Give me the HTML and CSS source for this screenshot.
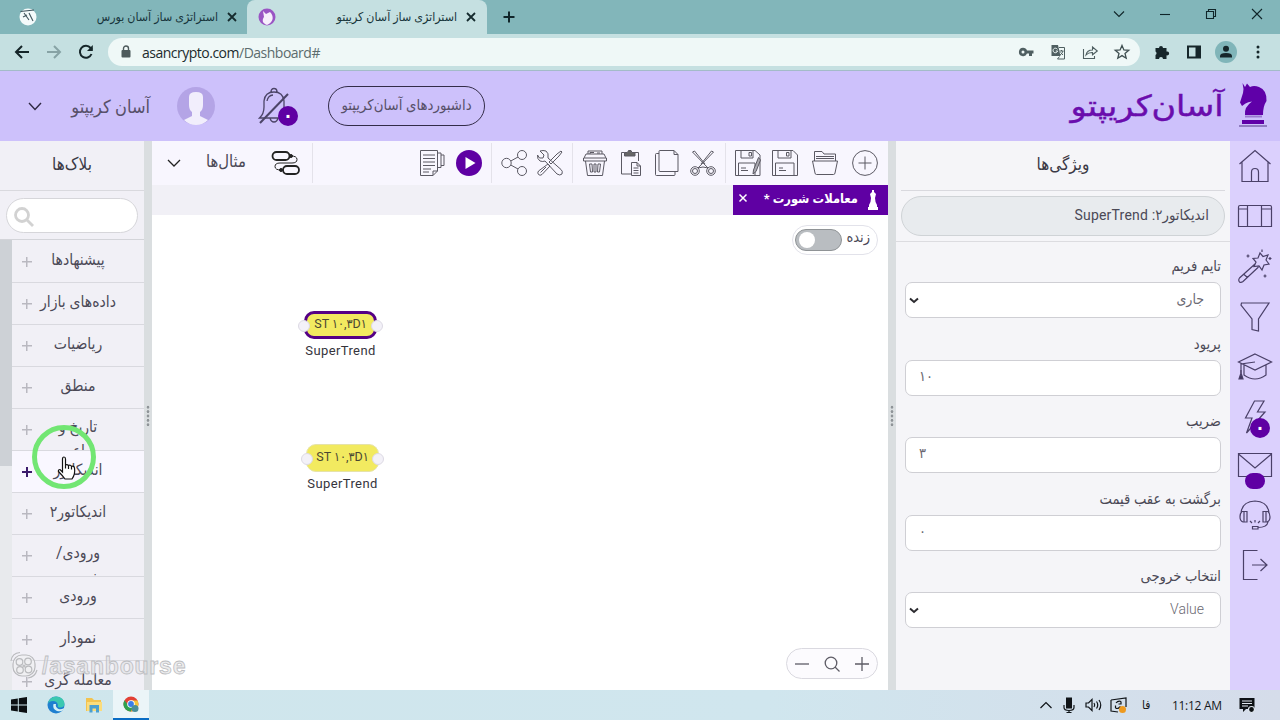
FILE: index.html
```html
<!DOCTYPE html>
<html lang="fa">
<head>
    <meta charset="UTF-8">
    <meta name="viewport" content="width=device-width, initial-scale=1.0">
    <title>استراتژی ساز آسان کریپتو</title>
    <link rel="stylesheet" href="styles.css">
</head>
<body>
    <!-- Browser tabs -->
    <div class="tabs">
        <div class="tab">
            <svg class="favicon" viewBox="0 0 18 18"><circle cx="9" cy="9" r="8.5" fill="#f4fafb"/><path d="M1.500 3.500 L15 2 M5 5 L10 12 M10 5 L14 13 M4 9 L8 7" stroke="#40535c" stroke-width="1.100" fill="none"/></svg>
            <span class="tab-title" dir="rtl">استراتژی ساز آسان بورس</span>
            <svg class="tab-close" viewBox="0 0 10 10"><path d="M1 1 L9 9 M9 1 L1 9" stroke="#152b2e" stroke-width="1.8"/></svg>
        </div>
        <div class="tab active">
            <svg class="favicon" viewBox="0 0 18 18"><circle cx="9" cy="9" r="8.5" fill="#9a55c4"/><path d="M5 3 L8 6 L12 4 C16 8 16 14 9 17 C4 15 4 12 6 9 Z" fill="#f7eefc"/></svg>
            <span class="tab-title" dir="rtl">استراتژی ساز آسان کریپتو</span>
            <svg class="tab-close" viewBox="0 0 10 10"><path d="M1 1 L9 9 M9 1 L1 9" stroke="#152b2e" stroke-width="1.8"/></svg>
        </div>
        <svg class="new-tab" viewBox="0 0 12 12"><path d="M6 0.5 V11.5 M0.5 6 H11.5" stroke="#10262a" stroke-width="2"/></svg>
        <div class="window-buttons">
            <svg viewBox="0 0 12 12"><path d="M1 3.5 L6 8.5 L11 3.5" /></svg>
            <svg viewBox="0 0 12 12"><path d="M1 6.5 H11" /></svg>
            <svg viewBox="0 0 12 12"><path d="M1.5 3.5 H8.5 V10.5 H1.5 Z M3.5 3.5 V1.5 H10.5 V8.5 H8.5" /></svg>
            <svg viewBox="0 0 12 12"><path d="M1 1 L11 11 M11 1 L1 11" /></svg>
        </div>
    </div>

    <!-- Address bar -->
    <div class="toolbar">
        <svg class="nav" viewBox="0 0 16 16"><path d="M15 8 H2 M8 2 L2 8 L8 14" /></svg>
        <svg class="nav disabled" viewBox="0 0 16 16"><path d="M1 8 H14 M8 2 L14 8 L8 14" /></svg>
        <svg class="nav" viewBox="0 0 16 16"><path d="M13.5 10 A6 6 0 1 1 12.6 4 L14 5.6" /><path d="M14.8 1 V7 H9 Z" class="solid"/></svg>
        <div class="address">
            <svg class="lock" viewBox="0 0 10 14"><rect x="0.5" y="5" width="9" height="7.5" rx="1" fill="#4d5a5c"/><path d="M2.5 6 V3.5 A2.5 2.5 0 0 1 7.5 3.5 V6" fill="none" stroke="#4d5a5c" stroke-width="1.4"/></svg>
            <span class="url">asancrypto.com<span class="path">/Dashboard#</span></span>
            <svg class="tool" viewBox="0 0 16 16"><path d="M5 3.7 A4.2 4.2 0 1 0 9 9.5 H11 V12 H14 V9.5 H15.5 V6.5 H9 A4.2 4.2 0 0 0 5 3.7 Z M5 6.5 A1.5 1.5 0 1 1 5 9.5 A1.5 1.5 0 1 1 5 6.5 Z" fill="#4f5f61" fill-rule="evenodd"/></svg>
            <svg class="tool" viewBox="0 0 16 16"><path d="M1.5 1 H8 L10.5 12 H1.5 Z" fill="#4f5f61"/><path d="M9 3.5 H14.5 V15 H7.5 L9.5 12.5 M9.5 7 H13.5 M11.5 6 V7 M13 7 Q12 10 10 11 M10.5 8.5 L13 11" stroke="#4f5f61" fill="none"/><path d="M7.4 5.4 A2.3 2.3 0 1 0 7.6 7 H5.8" stroke="#eff8f7" fill="none"/></svg>
            <svg class="tool" viewBox="0 0 16 16"><path d="M1.5 5 V14.5 H12.5 V12 M4 11 Q5 6 10.5 6 V3 L15.3 7 L10.5 10.8 V8.5 Q6.5 8.3 4 11 Z" stroke="#4f5f61" stroke-width="1.1" fill="none"/></svg>
            <svg class="tool" viewBox="0 0 16 16"><path d="M8 1.5 L9.9 6 L14.7 6.3 L11 9.4 L12.2 14.2 L8 11.6 L3.8 14.2 L5 9.4 L1.3 6.3 L6.1 6 Z" stroke="#3f4f51" stroke-width="1.3" fill="none"/></svg>
        </div>
        <svg class="ext" viewBox="0 0 16 16"><path d="M1.5 4 H5 A2 2 0 1 1 9 4 H12.5 V7.5 A2 2 0 1 1 12.5 11.3 V15 H9 A2 2 0 0 0 5 15 H1.5 V11 A2 2 0 0 0 1.5 7.5 Z" fill="#16262a"/></svg>
        <svg class="ext" viewBox="0 0 16 16"><path d="M1 1.5 H15 V14.5 H1 Z M3 3.5 V12.5 H9.5 V3.5 Z" fill="#16262a" fill-rule="evenodd"/></svg>
        <svg class="profile" viewBox="0 0 22 22"><circle cx="11" cy="11" r="11" fill="#80b5b9"/><circle cx="11" cy="7.8" r="3" fill="#16262a"/><path d="M5 16.5 V15 Q5 12 11 12 Q17 12 17 15 V16.5 Z" fill="#16262a"/></svg>
        <svg class="dots" viewBox="0 0 4 14"><circle cx="2" cy="2" r="1.5"/><circle cx="2" cy="7" r="1.5"/><circle cx="2" cy="12" r="1.5"/></svg>
    </div>

    <!-- Site header -->
    <header class="header">
        <svg class="user-arrow" viewBox="0 0 14 10"><path d="M1 2 L7 8.5 L13 2" /></svg>
        <span class="user-name" dir="rtl">آسان کریپتو</span>
        <svg class="avatar" viewBox="0 0 38 38"><circle cx="19" cy="19" r="19" fill="#b4a4e6"/><path d="M12 10 Q12 5 19 5 Q26 5 26 10 V18 Q26 23 23 25 V29 L31 33 Q26 38 19 38 Q12 38 7 33 L15 29 V25 Q12 23 12 18 Z" fill="#f1eefc"/></svg>
        <div class="bell">
            <svg viewBox="0 0 32 38"><path d="M1.500 31 Q6 27 6 20 V14 Q7 5 16 5 Q25 5 26 14 V20 Q26 27 30.500 31 Z M13 5 Q13 1.500 16 1.500 Q19 1.500 19 5 M12 31 Q13 35 16 35 Q19 35 20 31 M9 14 Q10 8.500 15 8" /><path d="M2 36 L30 7" stroke-width="2"/></svg>
            <span class="badge">۰</span>
        </div>
        <div class="dashboards" dir="rtl">داشبوردهای آسان‌کریپتو</div>
        <div class="logo">
            <svg class="logo-text" viewBox="0 0 154 46"><text x="76" y="34" text-anchor="middle" textLength="153" lengthAdjust="spacingAndGlyphs" direction="rtl">آسان‌کریپتو</text></svg>
            <svg class="logo-knight" viewBox="0 0 28 46"><path d="M3.500 1 L6 5 L8 1.500 L11 5 Q15 3 20 5 Q28 8 27.500 19 Q24 24 24 33 H6 Q5 25 13 19.500 Q9 20 6.500 21.500 L3 24 L1 20.500 L4 11 L4.500 7 Z" fill="#5f00a8"/><path d="M6 34.500 H23" stroke="#9a7ad0" stroke-width="2"/><path d="M3 38 H25 V42 H3 Z" fill="#5f00a8"/><path d="M0 44 H28" stroke="#8f7cc0" stroke-width="2"/></svg>
        </div>
    </header>

    <main class="main">
        <!-- Blocks panel -->
        <section class="blocks">
            <h2 class="panel-title" dir="rtl">بلاک‌ها</h2>
            <div class="search-row">
                <div class="search"><svg viewBox="0 0 20 20"><circle cx="8" cy="8" r="6.500"/><path d="M13 13 L19 19"/></svg></div>
            </div>
            <div class="block-scroll">
                <div class="scrollbar"><div class="thumb"></div></div>
                <ul class="block-list">
                    <li><i class="plus"></i><span dir="rtl">پیشنهادها</span></li>
                    <li><i class="plus"></i><span dir="rtl">داده‌های بازار</span></li>
                    <li><i class="plus"></i><span dir="rtl">ریاضیات</span></li>
                    <li><i class="plus"></i><span dir="rtl">منطق</span></li>
                    <li><i class="plus"></i><span class="wrap" dir="rtl">تاریخ و<br>ساعت</span></li>
                    <li class="hover"><i class="plus"></i><span dir="rtl">اندیکاتور</span></li>
                    <li><i class="plus"></i><span dir="rtl">اندیکاتور۲</span></li>
                    <li><i class="plus"></i><span class="wrap" dir="rtl">ورودی/<br>خروجی</span></li>
                    <li><i class="plus"></i><span dir="rtl">ورودی</span></li>
                    <li><i class="plus"></i><span dir="rtl">نمودار</span></li>
                    <li><i class="plus"></i><span dir="rtl">معامله گری</span></li>
                </ul>
            </div>
        </section>

        <div class="gutter"></div>

        <!-- Editor -->
        <section class="editor">
            <div class="actions">
                <div class="group samples">
                    <svg class="arrow" viewBox="0 0 14 10"><path d="M1 2 L7 8 L13 2"/></svg>
                    <span dir="rtl">مثال‌ها</span>
                    <svg class="flow" viewBox="0 0 30 26"><rect x="1.500" y="2" width="17" height="8" rx="4" stroke-width="1.800"/><rect x="12" y="16" width="16" height="8" rx="4" stroke-width="1.800"/><path d="M20 6 Q26 6 26 9.500 Q26 13 21 13 H9 Q4 13 4 16.500 Q4 20 10 20"/><circle cx="20" cy="6" r="1.500" fill="#222"/><circle cx="10" cy="20" r="1.500" fill="#222"/></svg>
                </div>
                <div class="group run">
                    <svg viewBox="0 0 26 26"><path d="M1.500 0.500 H18.500 V21 L14 25.500 H1.500 Z M14 25.500 V21 H18.500 M18.500 3 H22 V17.500 H18.500 M22 5 H25 V15.500 H22 M4 5 H16 M4 8.500 H16 M4 12 H16 M4 15.500 H16 M4 19 H12 M4 22 H10"/></svg>
                    <svg viewBox="0 0 26 26"><circle cx="13" cy="13" r="13" class="purple"/><path d="M9.500 7 L19.500 13 L9.500 19 Z" class="white"/></svg>
                </div>
                <div class="group tools">
                    <svg viewBox="0 0 26 26"><circle cx="5.500" cy="13" r="4.700"/><circle cx="21" cy="5" r="4.500"/><circle cx="21" cy="21" r="4.500"/><path d="M9.800 11 L17 7 M9.800 15 L17 19"/></svg>
                    <svg viewBox="0 0 26 26"><path d="M3 1 L7 5 L6 8 L2.500 8 L0.500 5 Q0 9 3 11 Q6 12 8 11 L20 24 Q23 26 25 24 Q26 21 24 19.500 L11 8 Q12 3 9 1 Q6 0 3 1 Z M24 1 L25 2 L22 6 L14 14 L12 12 L20 4 Z M11 14 L13 16 L5 24.500 Q3 26 1.500 24.500 Q0 23 1.500 21 Z M3.500 22.500 L9 17"/></svg>
                </div>
                <div class="group edit">
                    <svg viewBox="0 0 26 26"><path d="M6 4 V1 H20 V4 M4 4 H22 L24 8 H2 Z M1.500 8 V11 H24.500 V8 M3.500 11 L5.500 25.500 H20.500 L22.500 11 M7.500 14 L8.500 22 H10.500 L10 14 Z M12 14 H14 V22 H12 Z M16 14 L15.500 22 H17.500 L18.500 14 Z M8 4 V2.500 H12 M15 3 H18"/></svg>
                    <svg viewBox="0 0 26 26"><path d="M6.500 2.500 H3.500 V24 H13 M17 2.500 H20.500 V11 M13.500 12.500 H19 L22.500 16 V25.500 H13.500 Z M19 12.500 V16 H22.500 M15.500 18 H20.500 M15.500 20.500 H20.500 M15.500 23 H20.500"/><path d="M6.500 2.500 H9.500 L10.500 0.500 H13 L14 2.500 H17 V6 H6.500 Z" fill="#666"/></svg>
                    <svg viewBox="0 0 26 26"><path d="M6 0.500 H20 L24 4.500 V21.500 H6 Q5 21.500 5 20.500 V1.500 Q5 0.500 6 0.500 Z M20 0.500 V4.500 H24 M5 3.500 H2.500 Q1.500 3.500 1.500 4.500 V24.500 Q1.500 25.500 2.500 25.500 H20 Q21 25.500 21 24.500 V21.500"/></svg>
                    <svg viewBox="0 0 26 26"><circle cx="5" cy="21" r="4.300"/><circle cx="21" cy="21" r="4.300"/><circle cx="5" cy="21" r="2.500"/><circle cx="21" cy="21" r="2.500"/><path d="M8 18 L23.500 2 L21.500 1 L11 14 M18 18 L2.500 2 L4.500 1 L15 14 M8 18 L13 17 L18 18"/></svg>
                </div>
                <div class="group files">
                    <svg viewBox="0 0 26 26"><path d="M0.500 0.500 H20 L25 5 V25.500 H0.500 Z M6 0.500 V8 H18 V0.500 M14 2.500 H16.500 V6 H14 Z M3.500 25.500 V13 H20 V25.500 M6 18 H11 M6 20.500 H13"/><path d="M23.500 7.500 L18.500 20 L18 24 L21 21.500 L25.500 10 Z" fill="#aaa8b0"/></svg>
                    <svg viewBox="0 0 26 26"><path d="M0.500 0.500 H21 L25.500 5 V25.500 H0.500 Z M6 0.500 V8 H19 V0.500 M14.500 2.500 H17 V6 H14.500 Z M3.500 25.500 V13 H22 V25.500 M7 18 H11 M7 20.500 H14"/></svg>
                    <svg class="folder" viewBox="0 0 26 26"><path d="M2.500 11 V1.500 H10 L12 4 H23.500 V11 M4 6.500 H22 M4 8.500 H22 M0.500 11 H25.500 L23 23 Q22.800 24.500 21.500 24.500 H4.500 Q3.200 24.500 3 23 Z"/></svg>
                    <svg class="add" viewBox="0 0 26 26"><circle cx="13" cy="13" r="12.400"/><path d="M13 6.500 V19.500 M6.500 13 H19.500"/></svg>
                </div>
            </div>
            <div class="doc-tabs">
                <div class="doc-tab">
                    <svg class="close" viewBox="0 0 10 10"><path d="M1.500 1.500 L8.500 8.500 M8.500 1.500 L1.500 8.500"/></svg>
                    <span dir="rtl">معاملات شورت *</span>
                    <svg class="piece" viewBox="0 0 12 20"><path d="M5 0 H7 V2 L9 4 L8 8 Q8 12 10 15 V17 H11 V20 H1 V17 H2 V15 Q4 12 4 8 L3 4 L5 2 Z"/></svg>
                </div>
            </div>
            <div class="canvas">
                <div class="live"><span class="switch"></span><span class="live-text" dir="rtl">زنده</span></div>
                <div class="node node-first selected">
                    <div class="node-box">ST ۱۰,۳D۱</div>
                    <div class="node-name">SuperTrend</div>
                </div>
                <div class="node node-second">
                    <div class="node-box">ST ۱۰,۳D۱</div>
                    <div class="node-name">SuperTrend</div>
                </div>
                <div class="zoom">
                    <svg viewBox="0 0 16 16"><path d="M1 8 H15"/></svg>
                    <svg viewBox="0 0 16 16"><circle cx="7" cy="7" r="5.800"/><path d="M11 11 L15.500 15.500"/></svg>
                    <svg viewBox="0 0 16 16"><path d="M1 8 H15 M8 1 V15"/></svg>
                </div>
            </div>
        </section>

        <div class="gutter"></div>

        <!-- Properties panel -->
        <section class="props" dir="rtl">
            <h2 class="panel-title">ویژگی‌ها</h2>
            <div class="props-name"><div>اندیکاتور۲: <span class="latin">SuperTrend</span></div></div>
            <div class="field">
                <label>تایم فریم</label>
                <div class="input select"><span>جاری</span><svg viewBox="0 0 10 7"><path d="M1 1.500 L5 5 L9 1.500"/></svg></div>
            </div>
            <div class="field">
                <label>پریود</label>
                <div class="input number">۱۰</div>
            </div>
            <div class="field">
                <label>ضریب</label>
                <div class="input number">۳</div>
            </div>
            <div class="field">
                <label>برگشت به عقب قیمت</label>
                <div class="input number">۰</div>
            </div>
            <div class="field">
                <label>انتخاب خروجی</label>
                <div class="input select"><span class="value">Value</span><svg viewBox="0 0 10 7"><path d="M1 1.500 L5 5 L9 1.500"/></svg></div>
            </div>
        </section>

        <!-- Right menu -->
        <nav class="side">
            <a><svg viewBox="0 0 34 34"><path d="M1.500 15 L17 1.500 L32.500 15 M4 13 V32.500 H30 V13 M13.500 32.500 V23 Q13.500 19.500 17 19.500 Q20.500 19.500 20.500 23 V32.500"/></svg></a>
            <a><svg viewBox="0 0 34 34"><path d="M2 6.500 H32 Q33.500 6.500 33.500 8 V27.500 H0.500 V8 Q0.500 6.500 2 6.500 Z M9.500 6.500 V27.500 M23.500 6.500 V27.500 M0.500 10 H9.500 M23.500 10 H33.500"/></svg></a>
            <a><svg viewBox="0 0 34 34"><path d="M22 4 L25 7.500 L30 6 L28 11 L31 15 L26 16 L24 21 L21 17 L16 17.500 L18 13 L15 9.500 L20 9 Z M17 15 L1.500 29 Q0 31 1.500 33 Q3 34 5 32.500 L20.500 18 M6 25.500 L9.500 28.500"/><path d="M10 5.500 V8.500 M8.500 7 H11.500 M24 0.500 V3 M32 8 V11 M30.500 9.500 H33.500 M27 25.500 V28.500 M25.500 27 H28.500"/></svg></a>
            <a><svg viewBox="0 0 34 34"><path d="M3.500 4 H31 L20.500 20 V32 L14 30.500 V20 L3 6 Z"/></svg></a>
            <a><svg viewBox="0 0 34 34"><path d="M17 5 L33.500 13 L17 21 L0.500 13 Z M6 16 V26 Q17 34 28 26 V16 M17 13 L3 15 V24"/><path d="M3 24 L1 30 H5 Z M3 21 V25" fill="#3f3560"/></svg></a>
            <a><svg viewBox="0 0 34 34"><path d="M16.500 2 H26 L19.500 13 H27 L8.500 34 L14 19 H7.500 Z"/></svg><span class="badge bolt">۰</span></a>
            <a><svg viewBox="0 0 34 34"><path d="M0.500 4.500 H33.500 V27.500 H0.500 Z M0.500 5 L17 19 L33.500 5"/></svg><span class="badge mail"></span></a>
            <a><svg viewBox="0 0 34 34"><path d="M3 14 Q4 2.500 17 2 Q30 2.500 31 14 M3 12.500 H9 V23 H5 Q2 22 2 18 Q2 14 4 12.500 M6 12.500 V23 M31 12.500 H25 V23 H29 Q32 22 32 18 Q32 14 30 12.500 M28 12.500 V23 M30 23 Q29 28.500 20 28.500 M14.500 27.500 H20 V30 H14.500 Z M12 22 L14 24 M17 21 V23.500 M22 22 L20 24"/></svg></a>
            <a><svg viewBox="0 0 34 34"><path d="M19.500 1.500 H5.500 V30.500 H19.500 M14 16 H29 M22.500 10 L29 16 L22.500 22"/></svg></a>
        </nav>
    </main>

    <!-- Windows taskbar -->
    <footer class="taskbar">
        <div class="app"><svg viewBox="0 0 18 18"><path d="M1 3.500 L7.800 2.500 V8.500 H1 Z M8.800 2.300 L17 1 V8.500 H8.800 Z M1 9.500 H7.800 V15.500 L1 14.500 Z M8.800 9.500 H17 V17 L8.800 15.700 Z" fill="#0b0f12"/></svg></div>
        <div class="app"><svg viewBox="0 0 18 18"><circle cx="9" cy="9" r="8.500" fill="#1f7fd0"/><path d="M1 8 Q2 0.500 9.500 0.500 Q17 1 17.500 8 Q17 12 12.500 11.500 Q10 11 11 9 Q10 5 6 5 Q2 5 1 8 Z" fill="#3cc8b0"/><path d="M6.500 8 Q5 13 10 15 Q14 16 16 14 L17 12 Q14 14 11.500 13 Q8 11 9 8 Z" fill="#d6f0f5"/></svg></div>
        <div class="app"><svg viewBox="0 0 18 18"><path d="M1 2 H7 L9 4 H16 V15 H1 Z" fill="#f3c34f"/><path d="M2 6 H17 V15 H2 Z" fill="#fbdc7c"/><path d="M4.500 9 H14 V16.500 H11 V12.500 H7.500 V16.500 H4.500 Z" fill="#4b9fd0"/></svg></div>
        <div class="app current"><svg viewBox="0 0 18 18"><circle cx="9" cy="9" r="7.500" fill="#e24336"/><path d="M2.500 5.200 A7.500 7.500 0 0 0 9 16.500 L11 10 H6 Z" fill="#2ea24f"/><path d="M9 16.500 A7.500 7.500 0 0 0 15.500 5.500 H9 L12 10 Z" fill="#f5c63a"/><circle cx="9" cy="9" r="3.800" fill="#fff"/><circle cx="9" cy="9" r="2.900" fill="#3b7de8"/><circle cx="13" cy="13.500" r="3.500" fill="#4b8f9a"/></svg></div>
        <div class="tray">
            <svg class="up" viewBox="0 0 12 8"><path d="M0.500 7 L6 1.500 L11.500 7"/></svg>
            <svg class="mic" viewBox="0 0 12 16"><rect x="3" y="0.500" width="6" height="11" fill="#101418" stroke="none"/><path d="M1 8 V10.500 Q1 13.500 6 13.500 Q11 13.500 11 10.500 V8 M6 13.500 V15.500 M3.500 15.500 H8.500"/></svg>
            <svg class="sound" viewBox="0 0 17 14"><path d="M1 5 H3.500 L7 1.500 V12.500 L3.500 9 H1 Z M9 5 Q10.500 7 9 9 M11.500 3.500 Q14 7 11.500 10.500 M14 2 Q17.500 7 14 12"/></svg>
            <svg class="sync" viewBox="0 0 17 16"><path d="M1 3 L16 1 V10 M1 3 V14 L8 15 M11 4.500 Q8 3.500 6 6 M11 4.500 V7 H8.500 M5.500 11 Q8 12.500 10.500 9.500 M5.500 11 V8.500"/><circle cx="12.500" cy="12.500" r="3.500" fill="#ee9a1f" stroke="none"/></svg>
            <span class="lang">فا</span>
            <span class="clock">11:12 AM</span>
            <svg class="notice" viewBox="0 0 16 16"><path d="M0.500 1 H15.500 V12 H7 L4 15 V12 H0.500 Z" fill="#0d1114" stroke="none"/><path d="M3 4 H13 M3 6.500 H13 M3 9 H9" stroke="#dfe6ee"/><circle cx="12.500" cy="12.500" r="3" fill="#0d1114" stroke="#dfe6ee"/></svg>
        </div>
    </footer>

    <!-- Watermark and pointer -->
    <div class="watermark">
        <svg viewBox="0 0 28 28"><rect x="3" y="4" width="22" height="21" rx="9"/><circle cx="9.500" cy="11" r="3.300"/><circle cx="18" cy="10.500" r="3.300"/><circle cx="10" cy="19" r="3.300"/><circle cx="18.500" cy="18.500" r="3.300"/><circle cx="14" cy="15" r="1"/><path d="M1 10 Q2 2 10 1.500 M27 19 Q25 26 18 27" fill="none"/></svg>
        <span>/asanbourse</span>
    </div>
    <div class="pointer">
        <svg viewBox="0 0 22 26"><path d="M6.500 16 V3 Q6.500 1 8 1 Q9.500 1 9.500 3 V9 Q11 8 12.500 9.500 Q14.500 8.500 15.500 10.500 Q18 9.500 18.500 12 Q19.500 18 16 23 H9 Q6 19 2.500 15.500 Q2 13.500 4 13.500 Z M9.500 9 V12.500 M12.500 9.500 V13 M15.500 10.500 V13.500"/></svg>
    </div>
</body>
</html>
```
FILE: styles.css
```css
* {
    box-sizing: border-box;
}

body {
    margin: 0;
    width: 1280px;
    height: 720px;
    overflow: hidden;
    position: relative;
    display: flex;
    flex-direction: column;
    font-family: Roboto, "DejaVu Sans Condensed", "DejaVu Sans", sans-serif;
    font-size: 14px;
    color: #4b4956;
}

svg {
    display: block;
    flex: none;
    overflow: visible;
}

/* Browser */
.tabs {
    height: 34px;
    flex: none;
    display: flex;
    align-items: center;
    background-color: #82b6ba;
}

.tab {
    width: 247px;
    height: 34px;
    padding: 0 9px 0 19px;
    display: flex;
    align-items: center;
    gap: 8px;
}

.tab.active {
    width: 240px;
    padding: 0 10px 0 11px;
    background-color: #c5e0e1;
    border-radius: 8px 8px 0 0;
}

.favicon {
    width: 18px;
    height: 18px;
}

.tab-title {
    flex: 1;
    font-size: 12.3px;
    color: #17343a;
    white-space: nowrap;
}

.tab-close {
    width: 10px;
    height: 10px;
    margin: 0 1px;
}

.new-tab {
    width: 12px;
    height: 12px;
    margin-left: 16px;
}

.window-buttons {
    margin-left: auto;
    padding-right: 17px;
    display: flex;
    gap: 34px;
    margin-top: -6px;
}

.window-buttons svg {
    width: 12px;
    height: 12px;
    fill: none;
    stroke: #102529;
    stroke-width: 1.1;
}

.toolbar {
    height: 37px;
    flex: none;
    display: flex;
    align-items: center;
    padding: 0 18px 0 14px;
    background-color: #c5e0e1;
    border-bottom: 1px solid #a3bbc8;
}

.nav {
    width: 16px;
    height: 16px;
    margin-right: 16px;
    fill: none;
    stroke: #152629;
    stroke-width: 2;
}

.nav .solid {
    fill: #152629;
    stroke: none;
}

.nav.disabled {
    stroke: #87a3a5;
}

.address {
    width: 1032px;
    height: 28px;
    margin-left: -2px;
    margin-right: 14px;
    padding: 0 10px 0 13px;
    display: flex;
    align-items: center;
    gap: 16px;
    border-radius: 14px;
    background-color: #eff8f7;
}

.lock {
    width: 10px;
    height: 14px;
}

.url {
    flex: 1;
    margin-left: -5px;
    font-family: "Open Sans", "Noto Sans", sans-serif;
    font-size: 14px;
    letter-spacing: -0.5px;
    color: #1c2b2d;
}

.url .path {
    color: #5c6c6e;
}

.tool,
.ext {
    width: 16px;
    height: 16px;
}

.ext {
    margin-right: 16px;
}

.profile {
    width: 22px;
    height: 22px;
    margin-left: -3px;
}

.dots {
    width: 4px;
    height: 14px;
    margin-left: 19px;
    fill: #16262a;
}

/* Header */
.header {
    height: 70px;
    flex: none;
    display: flex;
    align-items: center;
    padding: 0 13px 0 28px;
    background-color: #cdc1fb;
    color: #575069;
}

.user-arrow {
    width: 14px;
    height: 10px;
    fill: none;
    stroke: #2e2842;
    stroke-width: 1.4;
}

.user-name {
    width: 81px;
    margin-left: 27px;
    font-size: 18px;
    white-space: nowrap;
}

.avatar {
    width: 38px;
    height: 38px;
    margin-left: 27px;
}

.bell {
    position: relative;
    width: 32px;
    height: 38px;
    margin-left: 43px;
}

.bell svg {
    width: 32px;
    height: 38px;
    fill: none;
    stroke: #4c4568;
    stroke-width: 1.3;
}

.badge {
    position: absolute;
    width: 20px;
    height: 20px;
    border-radius: 10px;
    background-color: #5f00a3;
    color: white;
    font-size: 18px;
    font-weight: bold;
    line-height: 19px;
    text-align: center;
}

.bell .badge {
    left: 20px;
    top: 19px;
}

.dashboards {
    width: 157px;
    height: 40px;
    margin-left: 38px;
    border: 1px solid #332c48;
    border-radius: 20px;
    font-size: 14.8px;
    line-height: 36px;
    text-align: center;
    white-space: nowrap;
}

.logo {
    margin-left: auto;
    display: flex;
    gap: 14px;
    align-items: center;
    margin-top: -3px;
}

.logo-text {
    width: 154px;
    height: 46px;
}

.logo-text text {
    font-family: "DejaVu Sans Condensed", "DejaVu Sans", sans-serif;
    font-size: 29px;
    fill: #6a0dad;
    stroke: #6a0dad;
    stroke-width: 0.4;
}

.logo-knight {
    width: 28px;
    height: 46px;
}

/* Panels */
.main {
    height: 549px;
    flex: none;
    display: flex;
}

.gutter {
    width: 8px;
    display: flex;
    align-items: center;
    justify-content: center;
    background-color: #dadee0;
}

.gutter::before {
    content: "";
    width: 4px;
    height: 22px;
    background-image: radial-gradient(circle, #8f9498 1.3px, transparent 1.6px);
    background-size: 4px 4.4px;
}

.panel-title {
    height: 50px;
    margin: 0;
    border-bottom: 1px solid #d9d9de;
    font-size: 17px;
    font-weight: normal;
    line-height: 46px;
    text-align: center;
    color: #3b3945;
}

.blocks {
    width: 144px;
    display: flex;
    flex-direction: column;
    background-color: #f1f0f6;
}

.search-row {
    height: 49px;
    padding: 7px 6px 0;
    border-bottom: 1px solid #d3d4d9;
}

.search {
    height: 35px;
    padding: 8px 7px;
    border: 1px solid #d6d6da;
    border-radius: 18px;
    background-color: white;
}

.search svg {
    width: 20px;
    height: 20px;
    fill: none;
    stroke: #d2d2d2;
    stroke-width: 2.8;
}

.block-scroll {
    flex: 1;
    min-height: 0;
    display: flex;
    overflow: hidden;
}

.scrollbar {
    width: 12px;
    background-color: #e8eaed;
}

.thumb {
    height: 226px;
    background-color: #cdd1d6;
}

.block-list {
    flex: 1;
    margin: 0;
    padding: 1px 0 0;
    list-style: none;
}

.block-list li {
    height: 42px;
    display: flex;
    align-items: center;
    border-bottom: 1px solid #d9d9df;
    overflow: hidden;
}

.block-list li.hover {
    background-color: #f9f7ff;
}

.block-list span {
    width: 88px;
    margin-left: 2px;
    margin-top: -4px;
    font-size: 15.6px;
    line-height: 24px;
    text-align: center;
    white-space: nowrap;
}

.block-list .wrap {
    align-self: flex-start;
    margin-top: 6px;
}

.plus {
    width: 10px;
    height: 10px;
    margin-left: 10px;
    background: linear-gradient(#b9b8c0, #b9b8c0) center / 10px 1.5px no-repeat,
        linear-gradient(#b9b8c0, #b9b8c0) center / 1.5px 10px no-repeat;
}

.hover .plus {
    background: linear-gradient(#3b1b6b, #3b1b6b) center / 10px 2px no-repeat,
        linear-gradient(#3b1b6b, #3b1b6b) center / 2px 10px no-repeat;
}

/* Editor */
.editor {
    width: 736px;
    display: flex;
    flex-direction: column;
}

.actions {
    height: 44px;
    display: flex;
    align-items: center;
    background-color: #f8f6fe;
}

.group {
    height: 40px;
    display: flex;
    align-items: center;
    gap: 10px;
    border-left: 1px solid #e4e2ea;
}

.group svg {
    width: 26px;
    height: 26px;
    fill: none;
    stroke: #5b5963;
    stroke-width: 1;
}

.group .purple {
    fill: #5f00a3;
    stroke: none;
}

.group .white {
    fill: white;
    stroke: none;
}

.samples {
    width: 161px;
    padding-left: 15px;
    border-left: none;
    border-right: 1px solid #e4e2ea;
}

.samples span {
    width: 42px;
    margin-left: 13px;
    font-size: 16.5px;
    white-space: nowrap;
    margin-top: -3px;
}

.samples .arrow {
    width: 14px;
    height: 10px;
    stroke: #222;
    stroke-width: 1.3;
}

.samples .flow {
    width: 30px;
    margin-left: 15px;
    stroke: #222;
}

.run {
    margin-left: auto;
    gap: 11px;
    padding-right: 9px;
    border-left: none;
}

.tools {
    width: 81px;
    padding-left: 9px;
}

.edit {
    width: 153px;
    padding-left: 9px;
}

.files {
    width: 163px;
    padding-left: 9px;
    gap: 11px;
}

.files .folder {
    margin-left: 3px;
}

.files .add {
    margin-left: 3px;
}

.doc-tabs {
    height: 30px;
    display: flex;
    justify-content: flex-end;
    background-color: #f1f0f6;
}

.doc-tab {
    width: 155px;
    height: 30px;
    padding: 0 9px 0 5px;
    display: flex;
    align-items: center;
    justify-content: space-between;
    background-color: #5f00a3;
    color: white;
    font-weight: bold;
}

.doc-tab span {
    width: 96px;
    margin-top: -3px;
    margin-left: 5px;
    white-space: nowrap;
    font-size: 12.8px;
}

.doc-tab .close {
    width: 10px;
    height: 10px;
    margin-top: -5px;
    stroke: white;
    stroke-width: 1.5;
}

.doc-tab .piece {
    width: 12px;
    height: 20px;
    fill: white;
}

.canvas {
    flex: 1;
    position: relative;
    background-color: white;
}

.live {
    position: absolute;
    right: 10px;
    top: 10px;
    width: 86px;
    height: 30px;
    padding: 0 7px 0 2px;
    display: flex;
    align-items: center;
    justify-content: space-between;
    border: 1px solid #e2e2ea;
    border-radius: 15px;
    font-size: 14.5px;
    line-height: 24px;
}

.live-text {
    margin-top: -4px;
}

.switch {
    width: 47px;
    height: 22px;
    padding: 2px 3px;
    border: 1px solid #8f9396;
    border-radius: 11px;
    background-color: #b9bdc1;
}

.switch::before {
    content: "";
    display: block;
    width: 16px;
    height: 16px;
    border-radius: 50%;
    background-color: white;
}

.node {
    position: absolute;
    width: 73px;
    text-align: center;
}

.node-first {
    left: 152px;
    top: 96px;
}

.node-second {
    left: 154px;
    top: 229px;
}

.node-box {
    position: relative;
    height: 28px;
    border: 1px solid #e6e3a8;
    border-radius: 10px;
    background-color: #f2ea60;
    font-size: 12.5px;
    line-height: 24px;
    color: #4a4732;
    white-space: nowrap;
}

.selected .node-box {
    border: 3px solid #550085;
    line-height: 20px;
}

.node-box::before,
.node-box::after {
    content: "";
    position: absolute;
    top: 8px;
    width: 10px;
    height: 10px;
    border: 1px solid #dddae4;
    border-radius: 50%;
    background-color: #f3f1f8;
}

.selected .node-box::before,
.selected .node-box::after {
    top: 6px;
}

.node-box::before {
    left: -6px;
}

.node-box::after {
    right: -6px;
}

.selected .node-box::before {
    left: -9px;
}

.selected .node-box::after {
    right: -9px;
}

.node-name {
    margin-top: 4px;
    font-size: 13px;
    letter-spacing: 0.4px;
    line-height: 16px;
    color: #35343c;
}

.zoom {
    position: absolute;
    right: 10px;
    bottom: 11px;
    width: 92px;
    height: 31px;
    padding: 0 7px;
    display: flex;
    align-items: center;
    justify-content: space-between;
    border: 1px solid #dad9e0;
    border-radius: 16px;
    background-color: #fcfbfe;
}

.zoom svg {
    width: 16px;
    height: 16px;
    fill: none;
    stroke: #5e5c66;
    stroke-width: 1.3;
}

/* Properties */
.props {
    width: 334px;
    background-color: #f5f5f8;
    font-size: 14px;
}

.props .panel-title {
    margin: 0 5px;
}

.props-name {
    height: 51px;
    padding: 5px 5px 0;
    border-bottom: 1px solid #dcdce0;
}

.props-name div {
    height: 40px;
    padding: 0 15px;
    border: 1px solid #cfd3d6;
    border-radius: 20px;
    background-color: #e8ebee;
    font-size: 14.8px;
    line-height: 36px;
}

.latin {
    font-size: 14px;
    letter-spacing: 0.2px;
}

.value {
    font-size: 14px;
    font-weight: 300;
}

.field {
    height: 77.5px;
    padding: 12px 9px 0;
}

.field label {
    display: block;
    height: 24px;
    margin-bottom: 4px;
    font-size: 14.6px;
    line-height: 24px;
}

.input {
    height: 36px;
    padding: 0 16px 0 3px;
    display: flex;
    align-items: center;
    justify-content: space-between;
    border: 1px solid #cfcfd4;
    border-radius: 7px;
    background-color: white;
    color: #6a6872;
}

.input span {
    margin-top: -3px;
}

.input.number {
    padding: 0 0 3px 13px;
    justify-content: flex-end;
    font-size: 14.5px;
}

.input svg {
    width: 10px;
    height: 7px;
    fill: none;
    stroke: #2c2b30;
    stroke-width: 2;
}

/* Right menu */
.side {
    width: 50px;
    background-color: #dbd0fd;
}

.side a {
    position: relative;
    height: 50px;
    display: flex;
    align-items: center;
    justify-content: center;
}

.side svg {
    width: 34px;
    height: 34px;
    fill: none;
    stroke: #4a4068;
    stroke-width: 1.2;
}

.side .bolt {
    left: 20px;
    top: 27px;
}

.side .mail {
    left: 15px;
    top: 32px;
    height: 16px;
    border-radius: 8px;
}

/* Taskbar */
.taskbar {
    height: 30px;
    flex: none;
    display: flex;
    background: linear-gradient(90deg, #cfe6ec, #d0e6ee 60%, #d5dcea);
}

.app {
    width: 38px;
    height: 30px;
    display: flex;
    align-items: center;
    justify-content: center;
}

.app:first-child {
    width: 37px;
}

.app.current {
    width: 36px;
    background-color: #ebf5f8;
    border-bottom: 2px solid #0a6cc4;
}

.app svg {
    width: 18px;
    height: 18px;
}

.tray {
    margin-left: auto;
    display: flex;
    align-items: center;
    padding-right: 25px;
    color: #14181c;
}

.tray svg {
    fill: none;
    stroke: #101418;
    stroke-width: 1.2;
}

.up {
    width: 12px;
    height: 8px;
}

.mic {
    width: 12px;
    height: 16px;
    margin-left: 11px;
}

.sound {
    width: 17px;
    height: 14px;
    margin-left: 10px;
}

.sync {
    width: 17px;
    height: 16px;
    margin-left: 8px;
}

.lang {
    width: 10px;
    margin-left: 15px;
    font-size: 12px;
}

.clock {
    width: 52px;
    margin-left: 20px;
    font-family: "Open Sans", "Noto Sans", sans-serif;
    font-size: 12px;
    letter-spacing: -0.3px;
    white-space: nowrap;
}

.notice {
    width: 16px;
    height: 16px;
    margin-left: 15px;
}

/* Overlays */
.watermark {
    position: absolute;
    left: 10px;
    top: 651px;
    display: flex;
    align-items: center;
    gap: 4px;
    font-family: "Liberation Sans", Arial, sans-serif;
    font-size: 23px;
    font-weight: bold;
    letter-spacing: 0.8px;
    line-height: 30px;
    color: rgba(225, 225, 228, 0.6);
    -webkit-text-stroke: 0.8px #bcbdc1;
}

.watermark svg {
    width: 28px;
    height: 28px;
    margin-top: -3px;
    fill: rgba(240, 240, 242, 0.6);
    stroke: #b9babd;
    stroke-width: 1.2;
}

.pointer {
    position: absolute;
    left: 32px;
    top: 425px;
    width: 64px;
    height: 64px;
    border: 5px solid #72e673;
    border-radius: 50%;
}

.pointer svg {
    width: 22px;
    height: 26px;
    margin: 26px 0 0 19px;
    fill: white;
    stroke: #111;
    stroke-width: 1.2;
}
```
